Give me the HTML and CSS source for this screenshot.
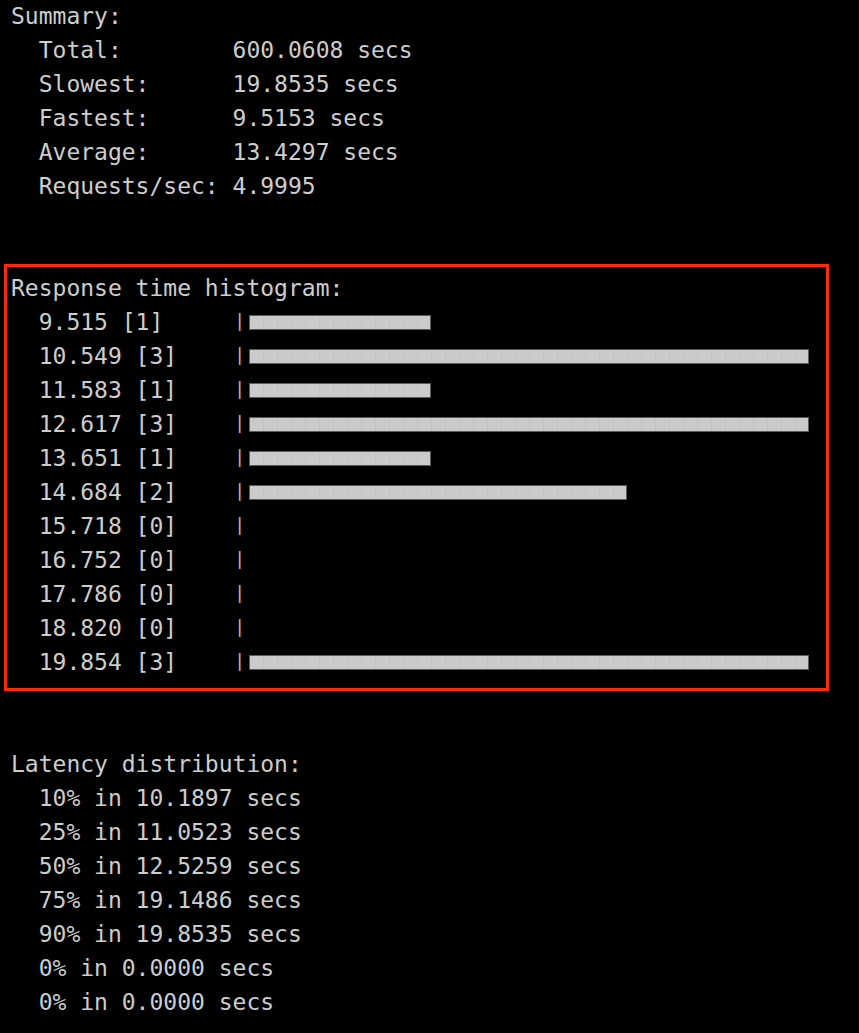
FILE: index.html
```html
<!DOCTYPE html>
<html>
<head>
<meta charset="utf-8">
<link rel="stylesheet" href="styles.css">
</head>
<body>
<div class="term">
  <div class="line">Summary:</div>
  <div class="line">  Total:        600.0608 secs</div>
  <div class="line">  Slowest:      19.8535 secs</div>
  <div class="line">  Fastest:      9.5153 secs</div>
  <div class="line">  Average:      13.4297 secs</div>
  <div class="line">  Requests/sec: 4.9995</div>
  <div class="line"> </div>
  <div class="line"> </div>

  <div class="highlight">
    <div class="line">Response time histogram:</div>
    <div class="row"><span class="label">  9.515 [1]</span><span class="pipe">|</span><span class="bar" style="width:182px"></span></div>
    <div class="row"><span class="label">  10.549 [3]</span><span class="pipe">|</span><span class="bar" style="width:560px"></span></div>
    <div class="row"><span class="label">  11.583 [1]</span><span class="pipe">|</span><span class="bar" style="width:182px"></span></div>
    <div class="row"><span class="label">  12.617 [3]</span><span class="pipe">|</span><span class="bar" style="width:560px"></span></div>
    <div class="row"><span class="label">  13.651 [1]</span><span class="pipe">|</span><span class="bar" style="width:182px"></span></div>
    <div class="row"><span class="label">  14.684 [2]</span><span class="pipe">|</span><span class="bar" style="width:378px"></span></div>
    <div class="row"><span class="label">  15.718 [0]</span><span class="pipe">|</span></div>
    <div class="row"><span class="label">  16.752 [0]</span><span class="pipe">|</span></div>
    <div class="row"><span class="label">  17.786 [0]</span><span class="pipe">|</span></div>
    <div class="row"><span class="label">  18.820 [0]</span><span class="pipe">|</span></div>
    <div class="row"><span class="label">  19.854 [3]</span><span class="pipe">|</span><span class="bar" style="width:560px"></span></div>
  </div>

  <div class="line"> </div>
  <div class="line"> </div>
  <div class="line">Latency distribution:</div>
  <div class="line">  10% in 10.1897 secs</div>
  <div class="line">  25% in 11.0523 secs</div>
  <div class="line">  50% in 12.5259 secs</div>
  <div class="line">  75% in 19.1486 secs</div>
  <div class="line">  90% in 19.8535 secs</div>
  <div class="line">  0% in 0.0000 secs</div>
  <div class="line">  0% in 0.0000 secs</div>
</div>
</body>
</html>
```

FILE: styles.css
```css
html, body {
  margin: 0;
  padding: 0;
  background: #000;
}

.term {
  margin-top: -1px;
  padding-left: 11px;
  font-family: "DejaVu Sans Mono", "Liberation Mono", monospace;
  font-size: 23px;
  color: #cdcdcd;
}

.line,
.row {
  height: 34px;
  line-height: 34px;
  white-space: pre;
}

.row {
  display: flex;
  align-items: center;
}

.label {
  width: 16ch;
  flex: none;
  white-space: pre;
}

.pipe {
  width: 14px;
  flex: none;
  text-align: center;
  font-size: 18px;
  line-height: 34px;
  color: #b8b8b8;
  position: relative;
  top: -1px;
}

.bar {
  flex: none;
  box-sizing: border-box;
  height: 15px;
  margin-left: 2px;
  margin-top: 1px;
  border: 1px solid #5c5c5c;
  background: repeating-linear-gradient(90deg, #cacaca 0 13px, #c3c3c3 13px 14px);
}

.highlight {
  box-sizing: border-box;
  width: 825px;
  margin: -7px 0 -12px -7px;
  padding: 4px 0 9px 4px;
  border: 3px solid #ff2a0d;
}
```
